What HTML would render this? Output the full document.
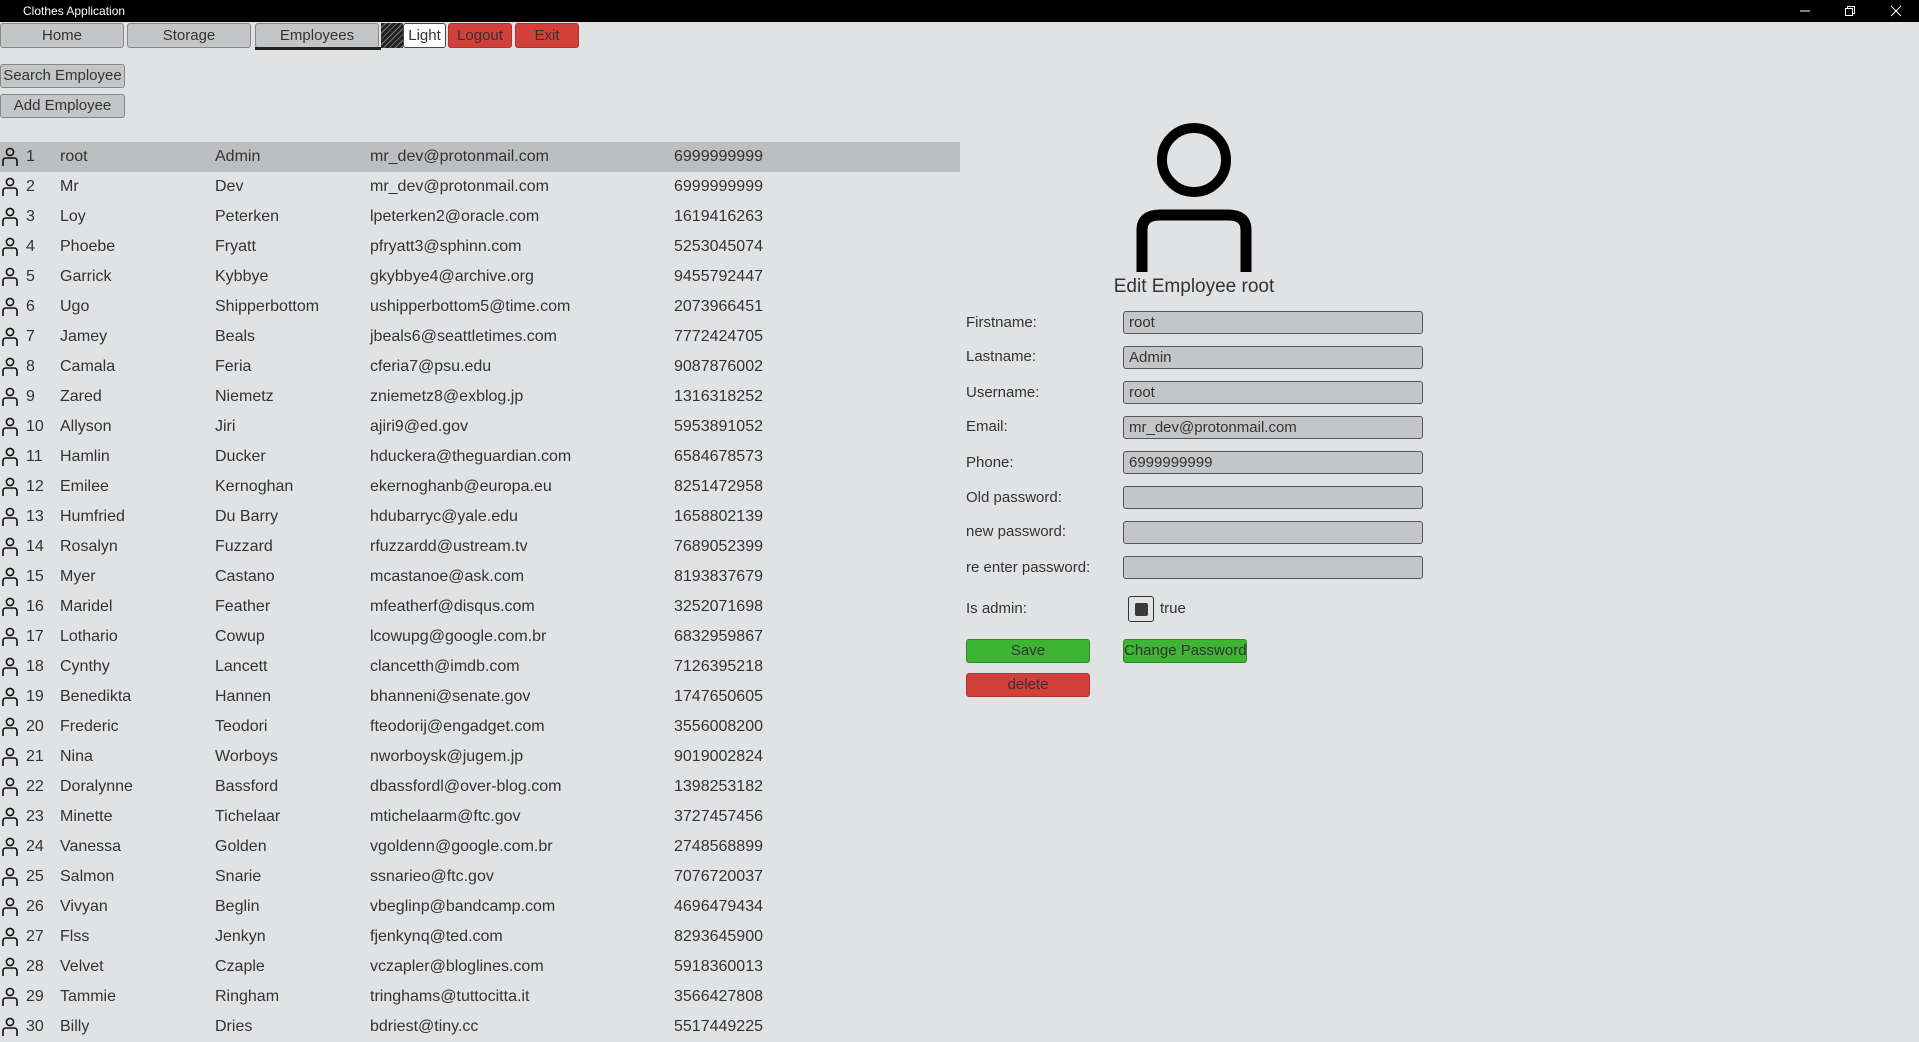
<!DOCTYPE html>
<html><head><meta charset="utf-8"><style>
*{margin:0;padding:0;box-sizing:border-box}
body{width:1919px;height:1031px;overflow:hidden;background:#e1e2e4;font-family:"Liberation Sans",sans-serif;color:#333;position:relative}
.tb{position:absolute;left:0;top:0;width:1919px;height:22px;background:#000;color:#fff;font-size:12px}
.tb span{position:absolute;left:23px;top:4px}
.wc{position:absolute;color:#fff}
.btn{position:absolute;height:25px;border:1px solid #888;border-radius:3px;background:#c4c5c7;font-size:15px;text-align:center;line-height:23px;color:#333;white-space:nowrap}
.red{background:#d2403a;border-color:#a33}
.row{position:absolute;left:0;width:960px;height:30px;font-size:16px;line-height:30px}
.row.sel{background:#bdbec0}
.row span{position:absolute;top:0}
.c0{left:26px}.c1{left:60px}.c2{left:215px}.c3{left:370px}.c4{left:674px}
.ic{position:absolute;left:1px;top:5px}
.lbl{position:absolute;left:966px;font-size:15px;line-height:20px}
.inp{position:absolute;left:1123px;width:300px;height:23px;border:1px solid #555;border-radius:3px;background:#c4c5c7;font-size:15px;line-height:21px;padding-left:5px}
.gb{background:#3eb434;border-color:#2a8a22}
</style></head><body>
<div class="tb"><span>Clothes Application</span>
<svg class="wc" style="left:1798px;top:4px" width="14" height="14"><line x1="2" y1="7" x2="12" y2="7" stroke="#fff"/></svg>
<svg class="wc" style="left:1843px;top:4px" width="14" height="14"><rect x="2.5" y="4.5" width="7" height="7" fill="none" stroke="#fff"/><path d="M4.5 4.5V2.5H11.5V9.5H9.5" fill="none" stroke="#fff"/></svg>
<svg class="wc" style="left:1889px;top:4px" width="14" height="14"><path d="M2 2L12 12M12 2L2 12" stroke="#fff"/></svg>
</div>
<div class="btn" style="left:0;top:23px;width:124px">Home</div>
<div class="btn" style="left:127px;top:23px;width:124px">Storage</div>
<div class="btn" style="left:255px;top:23px;width:124px">Employees</div>
<div style="position:absolute;left:255px;top:47px;width:126px;height:3px;background:#222"></div>
<div style="position:absolute;left:381px;top:23px;width:22px;height:25px;background:repeating-linear-gradient(135deg,#222 0 3px,#777 3px 4px)"></div>
<div class="btn" style="left:403px;top:23px;width:43px;background:#fff;border-color:#444">Light</div>
<div class="btn red" style="left:448px;top:23px;width:64px">Logout</div>
<div class="btn red" style="left:515px;top:23px;width:64px">Exit</div>
<div class="btn" style="left:0;top:64px;width:125px;height:24px;line-height:22px">Search Employee</div>
<div class="btn" style="left:0;top:94px;width:125px;height:24px;line-height:22px">Add Employee</div>

<div class="row sel" style="top:142px"><svg class="ic" width="18" height="20"><circle cx="9" cy="5" r="3.6" fill="none" stroke="#111" stroke-width="1.6"/><path d="M2 19V14Q2 11 5 11H13Q16 11 16 14V19" fill="none" stroke="#111" stroke-width="1.6"/></svg><span class="c0">1</span><span class="c1">root</span><span class="c2">Admin</span><span class="c3">mr_dev@protonmail.com</span><span class="c4">6999999999</span></div>
<div class="row" style="top:172px"><svg class="ic" width="18" height="20"><circle cx="9" cy="5" r="3.6" fill="none" stroke="#111" stroke-width="1.6"/><path d="M2 19V14Q2 11 5 11H13Q16 11 16 14V19" fill="none" stroke="#111" stroke-width="1.6"/></svg><span class="c0">2</span><span class="c1">Mr</span><span class="c2">Dev</span><span class="c3">mr_dev@protonmail.com</span><span class="c4">6999999999</span></div>
<div class="row" style="top:202px"><svg class="ic" width="18" height="20"><circle cx="9" cy="5" r="3.6" fill="none" stroke="#111" stroke-width="1.6"/><path d="M2 19V14Q2 11 5 11H13Q16 11 16 14V19" fill="none" stroke="#111" stroke-width="1.6"/></svg><span class="c0">3</span><span class="c1">Loy</span><span class="c2">Peterken</span><span class="c3">lpeterken2@oracle.com</span><span class="c4">1619416263</span></div>
<div class="row" style="top:232px"><svg class="ic" width="18" height="20"><circle cx="9" cy="5" r="3.6" fill="none" stroke="#111" stroke-width="1.6"/><path d="M2 19V14Q2 11 5 11H13Q16 11 16 14V19" fill="none" stroke="#111" stroke-width="1.6"/></svg><span class="c0">4</span><span class="c1">Phoebe</span><span class="c2">Fryatt</span><span class="c3">pfryatt3@sphinn.com</span><span class="c4">5253045074</span></div>
<div class="row" style="top:262px"><svg class="ic" width="18" height="20"><circle cx="9" cy="5" r="3.6" fill="none" stroke="#111" stroke-width="1.6"/><path d="M2 19V14Q2 11 5 11H13Q16 11 16 14V19" fill="none" stroke="#111" stroke-width="1.6"/></svg><span class="c0">5</span><span class="c1">Garrick</span><span class="c2">Kybbye</span><span class="c3">gkybbye4@archive.org</span><span class="c4">9455792447</span></div>
<div class="row" style="top:292px"><svg class="ic" width="18" height="20"><circle cx="9" cy="5" r="3.6" fill="none" stroke="#111" stroke-width="1.6"/><path d="M2 19V14Q2 11 5 11H13Q16 11 16 14V19" fill="none" stroke="#111" stroke-width="1.6"/></svg><span class="c0">6</span><span class="c1">Ugo</span><span class="c2">Shipperbottom</span><span class="c3">ushipperbottom5@time.com</span><span class="c4">2073966451</span></div>
<div class="row" style="top:322px"><svg class="ic" width="18" height="20"><circle cx="9" cy="5" r="3.6" fill="none" stroke="#111" stroke-width="1.6"/><path d="M2 19V14Q2 11 5 11H13Q16 11 16 14V19" fill="none" stroke="#111" stroke-width="1.6"/></svg><span class="c0">7</span><span class="c1">Jamey</span><span class="c2">Beals</span><span class="c3">jbeals6@seattletimes.com</span><span class="c4">7772424705</span></div>
<div class="row" style="top:352px"><svg class="ic" width="18" height="20"><circle cx="9" cy="5" r="3.6" fill="none" stroke="#111" stroke-width="1.6"/><path d="M2 19V14Q2 11 5 11H13Q16 11 16 14V19" fill="none" stroke="#111" stroke-width="1.6"/></svg><span class="c0">8</span><span class="c1">Camala</span><span class="c2">Feria</span><span class="c3">cferia7@psu.edu</span><span class="c4">9087876002</span></div>
<div class="row" style="top:382px"><svg class="ic" width="18" height="20"><circle cx="9" cy="5" r="3.6" fill="none" stroke="#111" stroke-width="1.6"/><path d="M2 19V14Q2 11 5 11H13Q16 11 16 14V19" fill="none" stroke="#111" stroke-width="1.6"/></svg><span class="c0">9</span><span class="c1">Zared</span><span class="c2">Niemetz</span><span class="c3">zniemetz8@exblog.jp</span><span class="c4">1316318252</span></div>
<div class="row" style="top:412px"><svg class="ic" width="18" height="20"><circle cx="9" cy="5" r="3.6" fill="none" stroke="#111" stroke-width="1.6"/><path d="M2 19V14Q2 11 5 11H13Q16 11 16 14V19" fill="none" stroke="#111" stroke-width="1.6"/></svg><span class="c0">10</span><span class="c1">Allyson</span><span class="c2">Jiri</span><span class="c3">ajiri9@ed.gov</span><span class="c4">5953891052</span></div>
<div class="row" style="top:442px"><svg class="ic" width="18" height="20"><circle cx="9" cy="5" r="3.6" fill="none" stroke="#111" stroke-width="1.6"/><path d="M2 19V14Q2 11 5 11H13Q16 11 16 14V19" fill="none" stroke="#111" stroke-width="1.6"/></svg><span class="c0">11</span><span class="c1">Hamlin</span><span class="c2">Ducker</span><span class="c3">hduckera@theguardian.com</span><span class="c4">6584678573</span></div>
<div class="row" style="top:472px"><svg class="ic" width="18" height="20"><circle cx="9" cy="5" r="3.6" fill="none" stroke="#111" stroke-width="1.6"/><path d="M2 19V14Q2 11 5 11H13Q16 11 16 14V19" fill="none" stroke="#111" stroke-width="1.6"/></svg><span class="c0">12</span><span class="c1">Emilee</span><span class="c2">Kernoghan</span><span class="c3">ekernoghanb@europa.eu</span><span class="c4">8251472958</span></div>
<div class="row" style="top:502px"><svg class="ic" width="18" height="20"><circle cx="9" cy="5" r="3.6" fill="none" stroke="#111" stroke-width="1.6"/><path d="M2 19V14Q2 11 5 11H13Q16 11 16 14V19" fill="none" stroke="#111" stroke-width="1.6"/></svg><span class="c0">13</span><span class="c1">Humfried</span><span class="c2">Du Barry</span><span class="c3">hdubarryc@yale.edu</span><span class="c4">1658802139</span></div>
<div class="row" style="top:532px"><svg class="ic" width="18" height="20"><circle cx="9" cy="5" r="3.6" fill="none" stroke="#111" stroke-width="1.6"/><path d="M2 19V14Q2 11 5 11H13Q16 11 16 14V19" fill="none" stroke="#111" stroke-width="1.6"/></svg><span class="c0">14</span><span class="c1">Rosalyn</span><span class="c2">Fuzzard</span><span class="c3">rfuzzardd@ustream.tv</span><span class="c4">7689052399</span></div>
<div class="row" style="top:562px"><svg class="ic" width="18" height="20"><circle cx="9" cy="5" r="3.6" fill="none" stroke="#111" stroke-width="1.6"/><path d="M2 19V14Q2 11 5 11H13Q16 11 16 14V19" fill="none" stroke="#111" stroke-width="1.6"/></svg><span class="c0">15</span><span class="c1">Myer</span><span class="c2">Castano</span><span class="c3">mcastanoe@ask.com</span><span class="c4">8193837679</span></div>
<div class="row" style="top:592px"><svg class="ic" width="18" height="20"><circle cx="9" cy="5" r="3.6" fill="none" stroke="#111" stroke-width="1.6"/><path d="M2 19V14Q2 11 5 11H13Q16 11 16 14V19" fill="none" stroke="#111" stroke-width="1.6"/></svg><span class="c0">16</span><span class="c1">Maridel</span><span class="c2">Feather</span><span class="c3">mfeatherf@disqus.com</span><span class="c4">3252071698</span></div>
<div class="row" style="top:622px"><svg class="ic" width="18" height="20"><circle cx="9" cy="5" r="3.6" fill="none" stroke="#111" stroke-width="1.6"/><path d="M2 19V14Q2 11 5 11H13Q16 11 16 14V19" fill="none" stroke="#111" stroke-width="1.6"/></svg><span class="c0">17</span><span class="c1">Lothario</span><span class="c2">Cowup</span><span class="c3">lcowupg@google.com.br</span><span class="c4">6832959867</span></div>
<div class="row" style="top:652px"><svg class="ic" width="18" height="20"><circle cx="9" cy="5" r="3.6" fill="none" stroke="#111" stroke-width="1.6"/><path d="M2 19V14Q2 11 5 11H13Q16 11 16 14V19" fill="none" stroke="#111" stroke-width="1.6"/></svg><span class="c0">18</span><span class="c1">Cynthy</span><span class="c2">Lancett</span><span class="c3">clancetth@imdb.com</span><span class="c4">7126395218</span></div>
<div class="row" style="top:682px"><svg class="ic" width="18" height="20"><circle cx="9" cy="5" r="3.6" fill="none" stroke="#111" stroke-width="1.6"/><path d="M2 19V14Q2 11 5 11H13Q16 11 16 14V19" fill="none" stroke="#111" stroke-width="1.6"/></svg><span class="c0">19</span><span class="c1">Benedikta</span><span class="c2">Hannen</span><span class="c3">bhanneni@senate.gov</span><span class="c4">1747650605</span></div>
<div class="row" style="top:712px"><svg class="ic" width="18" height="20"><circle cx="9" cy="5" r="3.6" fill="none" stroke="#111" stroke-width="1.6"/><path d="M2 19V14Q2 11 5 11H13Q16 11 16 14V19" fill="none" stroke="#111" stroke-width="1.6"/></svg><span class="c0">20</span><span class="c1">Frederic</span><span class="c2">Teodori</span><span class="c3">fteodorij@engadget.com</span><span class="c4">3556008200</span></div>
<div class="row" style="top:742px"><svg class="ic" width="18" height="20"><circle cx="9" cy="5" r="3.6" fill="none" stroke="#111" stroke-width="1.6"/><path d="M2 19V14Q2 11 5 11H13Q16 11 16 14V19" fill="none" stroke="#111" stroke-width="1.6"/></svg><span class="c0">21</span><span class="c1">Nina</span><span class="c2">Worboys</span><span class="c3">nworboysk@jugem.jp</span><span class="c4">9019002824</span></div>
<div class="row" style="top:772px"><svg class="ic" width="18" height="20"><circle cx="9" cy="5" r="3.6" fill="none" stroke="#111" stroke-width="1.6"/><path d="M2 19V14Q2 11 5 11H13Q16 11 16 14V19" fill="none" stroke="#111" stroke-width="1.6"/></svg><span class="c0">22</span><span class="c1">Doralynne</span><span class="c2">Bassford</span><span class="c3">dbassfordl@over-blog.com</span><span class="c4">1398253182</span></div>
<div class="row" style="top:802px"><svg class="ic" width="18" height="20"><circle cx="9" cy="5" r="3.6" fill="none" stroke="#111" stroke-width="1.6"/><path d="M2 19V14Q2 11 5 11H13Q16 11 16 14V19" fill="none" stroke="#111" stroke-width="1.6"/></svg><span class="c0">23</span><span class="c1">Minette</span><span class="c2">Tichelaar</span><span class="c3">mtichelaarm@ftc.gov</span><span class="c4">3727457456</span></div>
<div class="row" style="top:832px"><svg class="ic" width="18" height="20"><circle cx="9" cy="5" r="3.6" fill="none" stroke="#111" stroke-width="1.6"/><path d="M2 19V14Q2 11 5 11H13Q16 11 16 14V19" fill="none" stroke="#111" stroke-width="1.6"/></svg><span class="c0">24</span><span class="c1">Vanessa</span><span class="c2">Golden</span><span class="c3">vgoldenn@google.com.br</span><span class="c4">2748568899</span></div>
<div class="row" style="top:862px"><svg class="ic" width="18" height="20"><circle cx="9" cy="5" r="3.6" fill="none" stroke="#111" stroke-width="1.6"/><path d="M2 19V14Q2 11 5 11H13Q16 11 16 14V19" fill="none" stroke="#111" stroke-width="1.6"/></svg><span class="c0">25</span><span class="c1">Salmon</span><span class="c2">Snarie</span><span class="c3">ssnarieo@ftc.gov</span><span class="c4">7076720037</span></div>
<div class="row" style="top:892px"><svg class="ic" width="18" height="20"><circle cx="9" cy="5" r="3.6" fill="none" stroke="#111" stroke-width="1.6"/><path d="M2 19V14Q2 11 5 11H13Q16 11 16 14V19" fill="none" stroke="#111" stroke-width="1.6"/></svg><span class="c0">26</span><span class="c1">Vivyan</span><span class="c2">Beglin</span><span class="c3">vbeglinp@bandcamp.com</span><span class="c4">4696479434</span></div>
<div class="row" style="top:922px"><svg class="ic" width="18" height="20"><circle cx="9" cy="5" r="3.6" fill="none" stroke="#111" stroke-width="1.6"/><path d="M2 19V14Q2 11 5 11H13Q16 11 16 14V19" fill="none" stroke="#111" stroke-width="1.6"/></svg><span class="c0">27</span><span class="c1">Flss</span><span class="c2">Jenkyn</span><span class="c3">fjenkynq@ted.com</span><span class="c4">8293645900</span></div>
<div class="row" style="top:952px"><svg class="ic" width="18" height="20"><circle cx="9" cy="5" r="3.6" fill="none" stroke="#111" stroke-width="1.6"/><path d="M2 19V14Q2 11 5 11H13Q16 11 16 14V19" fill="none" stroke="#111" stroke-width="1.6"/></svg><span class="c0">28</span><span class="c1">Velvet</span><span class="c2">Czaple</span><span class="c3">vczapler@bloglines.com</span><span class="c4">5918360013</span></div>
<div class="row" style="top:982px"><svg class="ic" width="18" height="20"><circle cx="9" cy="5" r="3.6" fill="none" stroke="#111" stroke-width="1.6"/><path d="M2 19V14Q2 11 5 11H13Q16 11 16 14V19" fill="none" stroke="#111" stroke-width="1.6"/></svg><span class="c0">29</span><span class="c1">Tammie</span><span class="c2">Ringham</span><span class="c3">tringhams@tuttocitta.it</span><span class="c4">3566427808</span></div>
<div class="row" style="top:1012px"><svg class="ic" width="18" height="20"><circle cx="9" cy="5" r="3.6" fill="none" stroke="#111" stroke-width="1.6"/><path d="M2 19V14Q2 11 5 11H13Q16 11 16 14V19" fill="none" stroke="#111" stroke-width="1.6"/></svg><span class="c0">30</span><span class="c1">Billy</span><span class="c2">Dries</span><span class="c3">bdriest@tiny.cc</span><span class="c4">5517449225</span></div>

<svg style="position:absolute;left:1130px;top:115px" width="130" height="160"><circle cx="64" cy="45" r="32" fill="none" stroke="#000" stroke-width="10"/><path d="M12 157V115Q12 100 30 100H98Q116 100 116 115V157" fill="none" stroke="#000" stroke-width="11"/></svg>
<div style="position:absolute;left:1060px;top:276px;width:268px;text-align:center;font-size:19px">Edit Employee root</div>

<div class="lbl" style="top:313px">Firstname:</div><div class="inp" style="top:311px">root</div>
<div class="lbl" style="top:347px">Lastname:</div><div class="inp" style="top:346px">Admin</div>
<div class="lbl" style="top:383px">Username:</div><div class="inp" style="top:381px">root</div>
<div class="lbl" style="top:417px">Email:</div><div class="inp" style="top:416px">mr_dev@protonmail.com</div>
<div class="lbl" style="top:453px">Phone:</div><div class="inp" style="top:451px">6999999999</div>
<div class="lbl" style="top:488px">Old password:</div><div class="inp" style="top:486px"></div>
<div class="lbl" style="top:522px">new password:</div><div class="inp" style="top:521px"></div>
<div class="lbl" style="top:558px">re enter password:</div><div class="inp" style="top:556px"></div>
<div class="lbl" style="top:599px">Is admin:</div>
<div style="position:absolute;left:1128px;top:596px;width:26px;height:26px;border:1px solid #333;border-radius:3px"><div style="position:absolute;left:6px;top:6px;width:13px;height:13px;background:#3a3a3a;border-radius:2px"></div></div>
<div class="lbl" style="left:1160px;top:599px">true</div>
<div class="btn gb" style="left:966px;top:639px;width:124px;height:24px;line-height:22px">Save</div>
<div class="btn gb" style="left:1123px;top:639px;width:124px;height:24px;line-height:22px">Change Password</div>
<div class="btn red" style="left:966px;top:673px;width:124px;height:24px;line-height:22px">delete</div>
</body></html>
